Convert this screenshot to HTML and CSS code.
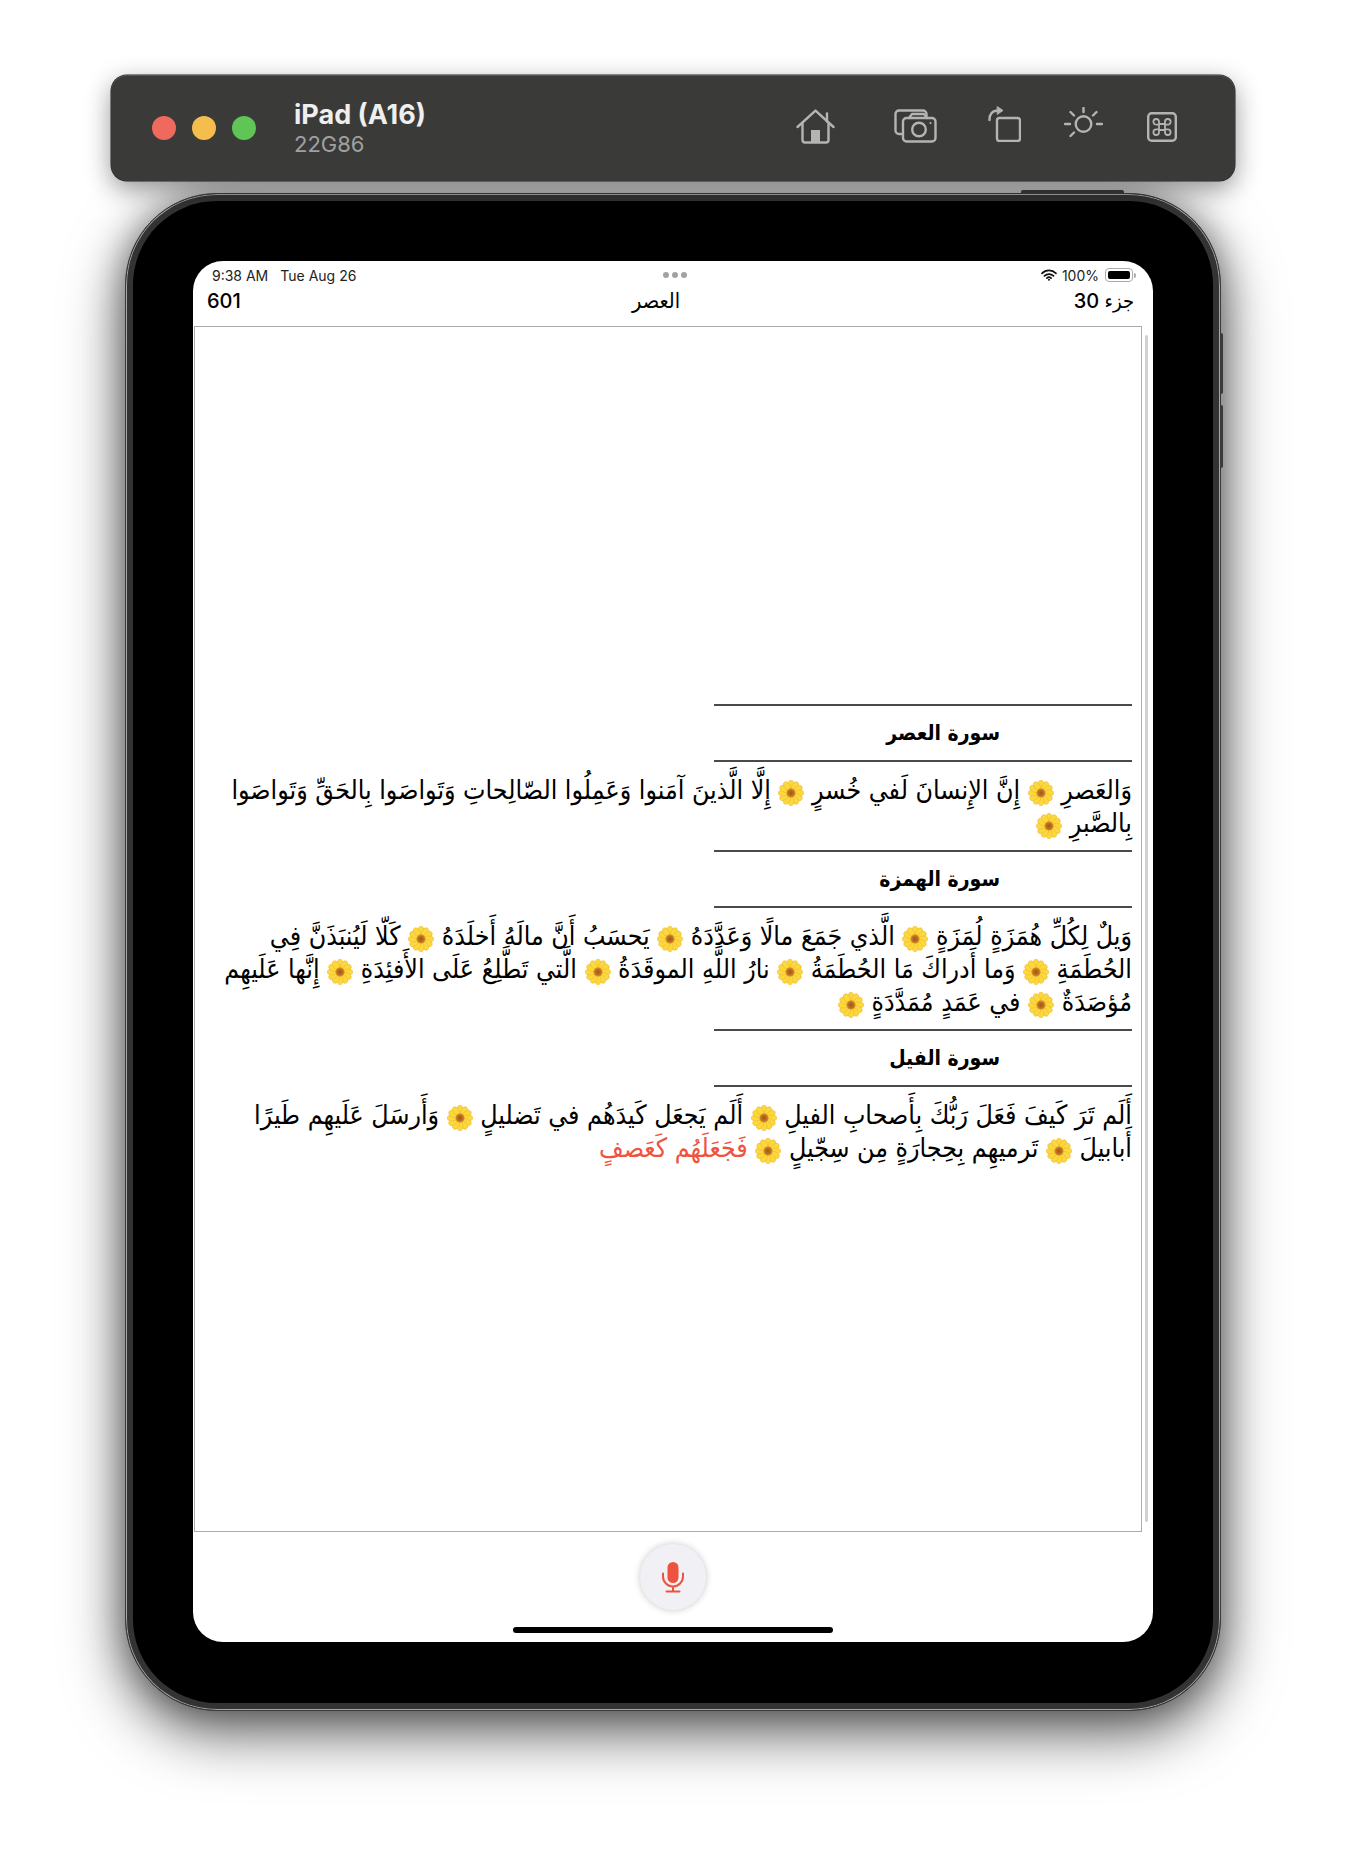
FILE: index.html
```html
<!DOCTYPE html>
<html lang="en">
<head>
<meta charset="utf-8">
<title>iPad (A16)</title>
<link rel="stylesheet" href="styles.css">
</head>
<body>
<svg class="defs" width="0" height="0" aria-hidden="true">
  <defs>
    <radialGradient id="core">
      <stop offset="0" stop-color="#a5531c"/>
      <stop offset="0.65" stop-color="#bd7320"/>
      <stop offset="1" stop-color="#e0a228"/>
    </radialGradient>
    <ellipse id="petal" cx="12" cy="4.600" rx="2.700" ry="4.300" fill="#fcd83f" stroke="#eeb526" stroke-width=".5"/>
    <symbol id="flower" viewBox="0 0 24 24">
      <use href="#petal"/>
      <use href="#petal" transform="rotate(30 12 12)"/>
      <use href="#petal" transform="rotate(60 12 12)"/>
      <use href="#petal" transform="rotate(90 12 12)"/>
      <use href="#petal" transform="rotate(120 12 12)"/>
      <use href="#petal" transform="rotate(150 12 12)"/>
      <use href="#petal" transform="rotate(180 12 12)"/>
      <use href="#petal" transform="rotate(210 12 12)"/>
      <use href="#petal" transform="rotate(240 12 12)"/>
      <use href="#petal" transform="rotate(270 12 12)"/>
      <use href="#petal" transform="rotate(300 12 12)"/>
      <use href="#petal" transform="rotate(330 12 12)"/>
      <circle cx="12" cy="12" r="4.300" fill="url(#core)"/>
    </symbol>
  </defs>
</svg>
<main class="stage">
  <header class="toolbar">
    <div class="lights">
      <span class="light red"></span>
      <span class="light yellow"></span>
      <span class="light green"></span>
    </div>
    <div class="device-name">
      <div class="name">iPad (A16)</div>
      <div class="build">22G86</div>
    </div>
    <div class="tools">
      <svg class="tool home" width="39" height="35" viewBox="0 0 39 35" fill="none" stroke="#b4b4b4" stroke-width="2.4" stroke-linecap="round" stroke-linejoin="round">
        <path d="M1.500 18 19.500 1.600 37.500 18"/>
        <path d="M6.500 15v16a2.500 2.500 0 0 0 2.500 2.500h21a2.500 2.500 0 0 0 2.500-2.500V15"/>
        <path d="M31 4.500v8"/>
        <path d="M15 33.500V21h9v12.500z" fill="#b4b4b4" stroke="none"/>
      </svg>
      <svg class="tool camera" width="43" height="34" viewBox="0 0 43 34" fill="none" stroke="#b4b4b4" stroke-width="2.4" stroke-linecap="round" stroke-linejoin="round">
        <path d="M7 25H5a3.500 3.500 0 0 1-3.500-3.500V5A3.500 3.500 0 0 1 5 1.500h24A3.500 3.500 0 0 1 32.500 5v2"/>
        <rect x="9" y="9" width="32.500" height="23.500" rx="3.500"/>
        <path d="M15 9l3-4h12l3 4"/>
        <circle cx="25" cy="20.500" r="6.800"/>
        <circle cx="36.500" cy="14" r="1.100" fill="#b4b4b4" stroke="none"/>
      </svg>
      <svg class="tool rotate" width="33" height="36" viewBox="0 0 33 36" fill="none" stroke="#b4b4b4" stroke-width="2.400" stroke-linecap="round" stroke-linejoin="round">
        <rect x="9" y="12" width="23" height="23" rx="2.500"/>
        <path d="M1.500 14C1.500 9 3.500 5 9 4.500"/>
        <path d="M9.500 .8 15 4.500 9.500 8.200z" fill="#b4b4b4" stroke-width="1"/>
      </svg>
      <svg class="tool sun" width="39" height="34" viewBox="0 0 39 34" fill="none" stroke="#b4b4b4" stroke-width="2.400" stroke-linecap="round">
        <circle cx="19.500" cy="17" r="7.800"/>
        <path d="M19.500 1v4M1 17h5M33 17h5M6.500 5l3.500 3.500M32.500 5 29 8.500M6.500 29l3.500-3.500"/>
      </svg>
      <svg class="tool cmd" width="30" height="30" viewBox="0 0 30 30" fill="none" stroke="#b4b4b4" stroke-width="2.400" stroke-linejoin="round">
        <rect x="1.200" y="1.200" width="27.600" height="27.600" rx="3.500"/>
        <path stroke-width="1.800" d="M12 12h6v6h-6zM12 12V9.800A2.800 2.800 0 1 0 9.200 12.600H12M18 12V9.800a2.800 2.800 0 1 1 2.800 2.800H18M12 18v2.200a2.800 2.800 0 1 1-2.800-2.800H12M18 18v2.200a2.800 2.800 0 1 0 2.800-2.800H18"/>
      </svg>
    </div>
  </header>

  <section class="device">
    <span class="hw hw-top"></span>
    <span class="hw hw-vol1"></span>
    <span class="hw hw-vol2"></span>
    <div class="screen">
      <div class="statusbar">
        <div class="status-left">
          <span>9:38 AM</span>
          <span>Tue Aug 26</span>
        </div>
        <div class="dots"><i></i><i></i><i></i></div>
        <div class="status-right">
          <svg width="16" height="12" viewBox="0 0 16 12" fill="none" stroke="#111" stroke-width="1.700" stroke-linecap="round">
            <path d="M1 4.300a10 10 0 0 1 14 0M3.500 6.900a6.500 6.500 0 0 1 9 0M5.900 9.200a3 3 0 0 1 4.200 0"/>
            <circle cx="8" cy="10.800" r="1" fill="#111" stroke="none"/>
          </svg>
          <span class="pct">100%</span>
          <span class="battery"><span class="battery-fill"></span></span>
          <span class="battery-nub"></span>
        </div>
      </div>
      <div class="pagebar">
        <span class="page-num">601</span>
        <span class="page-sura" dir="rtl">العصر</span>
        <span class="page-juz" dir="rtl">جزء 30</span>
      </div>
      <div class="reader">
        <article class="page" dir="rtl">
          <hr class="rule">
          <h2 class="sura">سورة العصر</h2>
          <hr class="rule">
          <p class="verses">وَالعَصرِ <svg class="fl"><use href="#flower"/></svg> إِنَّ الإِنسانَ لَفي خُسرٍ <svg class="fl"><use href="#flower"/></svg> إِلَّا الَّذينَ آمَنوا وَعَمِلُوا الصّالِحاتِ وَتَواصَوا بِالحَقِّ وَتَواصَوا<br>بِالصَّبرِ <svg class="fl"><use href="#flower"/></svg></p>
          <hr class="rule">
          <h2 class="sura">سورة الهمزة</h2>
          <hr class="rule">
          <p class="verses">وَيلٌ لِكُلِّ هُمَزَةٍ لُمَزَةٍ <svg class="fl"><use href="#flower"/></svg> الَّذي جَمَعَ مالًا وَعَدَّدَهُ <svg class="fl"><use href="#flower"/></svg> يَحسَبُ أَنَّ مالَهُ أَخلَدَهُ <svg class="fl"><use href="#flower"/></svg> كَلّا لَيُنبَذَنَّ فِي<br>الحُطَمَةِ <svg class="fl"><use href="#flower"/></svg> وَما أَدراكَ مَا الحُطَمَةُ <svg class="fl"><use href="#flower"/></svg> نارُ اللَّهِ الموقَدَةُ <svg class="fl"><use href="#flower"/></svg> الَّتي تَطَّلِعُ عَلَى الأَفئِدَةِ <svg class="fl"><use href="#flower"/></svg> إِنَّها عَلَيهِم<br>مُؤصَدَةٌ <svg class="fl"><use href="#flower"/></svg> في عَمَدٍ مُمَدَّدَةٍ <svg class="fl"><use href="#flower"/></svg></p>
          <hr class="rule">
          <h2 class="sura">سورة الفيل</h2>
          <hr class="rule">
          <p class="verses">أَلَم تَرَ كَيفَ فَعَلَ رَبُّكَ بِأَصحابِ الفيلِ <svg class="fl"><use href="#flower"/></svg> أَلَم يَجعَل كَيدَهُم في تَضليلٍ <svg class="fl"><use href="#flower"/></svg> وَأَرسَلَ عَلَيهِم طَيرًا<br>أَبابيلَ <svg class="fl"><use href="#flower"/></svg> تَرميهِم بِحِجارَةٍ مِن سِجّيلٍ <svg class="fl"><use href="#flower"/></svg> <span class="current">فَجَعَلَهُم كَعَصفٍ</span></p>
        </article>
        <span class="scrollbar"></span>
      </div>
      <footer class="controls">
        <button class="mic" type="button" aria-label="Microphone">
          <svg width="22" height="31" viewBox="0 0 22 31" fill="none" stroke="#ee5340" stroke-width="2" stroke-linecap="round">
            <rect x="5.500" y="0" width="11" height="21" rx="5.500" fill="#ee5340" stroke="none"/>
            <path d="M1 11.500v3a10 10 0 0 0 20 0v-3M11 24.500V29M4.500 29.500h13"/>
          </svg>
        </button>
        <span class="homebar"></span>
      </footer>
    </div>
  </section>
</main>
</body>
</html>
```

FILE: styles.css
```css
* { box-sizing: border-box; }

html, body {
  margin: 0;
  padding: 0;
  background: #fff;
}

.defs { display: block; height: 0; }

.stage {
  height: 1870px;
  padding: 75px 0 0 111px;
  overflow: hidden;
  font-family: Inter, "Liberation Sans", sans-serif;
}

/* simulator title bar */
.toolbar {
  position: relative;
  z-index: 2;
  display: flex;
  align-items: center;
  width: 1124px;
  height: 106px;
  padding: 0 58px 0 41px;
  background: #3a3a39;
  border-radius: 16px;
  box-shadow: inset 0 1px 0 #555, 0 0 0 .5px #222, 0 8px 26px rgba(0, 0, 0, .42);
}

.lights { display: flex; gap: 16px; }
.light { width: 24px; height: 24px; border-radius: 50%; }
.red { background: #f0695f; }
.yellow { background: #f5bd4e; }
.green { background: #5fc655; }

.device-name { margin-left: 38px; padding-top: 3px; }
.name {
  color: #efefef;
  font-size: 27px;
  font-weight: 700;
  line-height: 30px;
}
.build {
  color: #a0a0a0;
  font-size: 22px;
  line-height: 29px;
  font-weight: 400;
}

.tools { display: flex; align-items: center; margin: 0 0 4px auto; }
.tool { display: block; flex: none; }
.camera { margin-left: 59px; }
.rotate { margin-left: 51px; margin-top: -4px; }
.sun { margin-left: 43px; margin-top: -4px; }
.cmd { margin-left: 44px; margin-top: 2px; }

/* iPad body */
.device {
  position: relative;
  width: 1096px;
  height: 1518px;
  margin: 12px 0 0 14px;
  padding: 67px 67px 0 67px;
  background: #000;
  border: 1px solid #3b3b3b;
  border-radius: 92px;
  box-shadow:
    inset 0 0 0 1px #a5a5a5,
    inset 0 0 0 7px #333,
    0 22px 60px rgba(0, 0, 0, .62),
    0 0 34px rgba(0, 0, 0, .35);
}

.hw { position: absolute; background: #3a3a3a; }
.hw-top { top: -4px; left: 895px; width: 103px; height: 4px; border-radius: 2px 2px 0 0; }
.hw-vol1 { top: 139px; right: -3px; width: 3px; height: 61px; border-radius: 0 2px 2px 0; }
.hw-vol2 { top: 211px; right: -3px; width: 3px; height: 63px; border-radius: 0 2px 2px 0; }

.screen {
  display: flex;
  flex-direction: column;
  width: 960px;
  height: 1381px;
  background: #fff;
  border-radius: 30px;
  overflow: hidden;
  color: #000;
}

.statusbar {
  position: relative;
  display: flex;
  align-items: center;
  justify-content: space-between;
  flex: none;
  height: 28px;
  padding: 0 17px 0 19px;
  font-size: 14px;
  color: #222;
}
.status-left { display: flex; gap: 12px; }
.dots {
  position: absolute;
  left: 470px;
  top: 11px;
  display: flex;
  gap: 3px;
}
.dots i { width: 6px; height: 6px; border-radius: 50%; background: #a2a2a2; }
.status-right { display: flex; align-items: center; font-size: 14px; }
.pct { margin: 0 6px 0 5px; }
.battery {
  display: block;
  width: 28px;
  height: 14px;
  padding: 2px;
  border: 1px solid #aaa;
  border-radius: 4px;
}
.battery-fill { display: block; height: 100%; background: #000; border-radius: 2px; }
.battery-nub { width: 2px; height: 5px; margin-left: 1px; background: #aaa; border-radius: 0 2px 2px 0; }

.pagebar {
  position: relative;
  display: flex;
  align-items: center;
  justify-content: space-between;
  flex: none;
  height: 37px;
  padding: 0 19px 14px 14px;
  font-family: "DejaVu Sans", sans-serif;
}
.page-num { font-family: Inter, sans-serif; font-size: 20px; font-weight: 500; }
.page-sura { position: absolute; left: 439px; top: -1px; font-family: "DejaVu Sans Condensed", "DejaVu Sans", sans-serif; font-size: 21.500px; }
.page-juz { font-family: Inter, "DejaVu Sans Condensed", "DejaVu Sans", sans-serif; font-size: 20px; font-weight: 500; }

.reader {
  position: relative;
  flex: none;
  width: 948px;
  height: 1206px;
  margin-left: 1px;
  border: 1px solid #acacac;
  padding-top: 377px;
}
.scrollbar {
  position: absolute;
  top: 8px;
  right: -7px;
  width: 3px;
  height: 1187px;
  background: #d2d2d2;
  border-radius: 2px;
}

.page { padding: 0 9px 0 10px; }
.rule {
  width: 418px;
  height: 2px;
  margin: 0;
  border: 0;
  background: #4a4a4a;
}
.sura {
  display: flex;
  align-items: center;
  height: 54px;
  margin: 0;
  padding-right: 132px;
  font-family: "DejaVu Sans Condensed", "DejaVu Sans", sans-serif;
  font-size: 21px;
  font-weight: 700;
}
.verses {
  margin: 0;
  padding: 11px 0 11px;
  font-family: "DejaVu Sans Condensed", "DejaVu Sans", sans-serif;
  font-size: 26.500px;
  line-height: 33px;
}
.fl { width: 26px; height: 26px; margin: -8px 0; vertical-align: 1px; }
.current { color: #ef5340; }

.controls {
  position: relative;
  flex: 1;
  display: flex;
  justify-content: center;
  padding-top: 12px;
}
.mic {
  display: flex;
  align-items: center;
  justify-content: center;
  width: 66px;
  height: 66px;
  padding: 0;
  border: 0;
  border-radius: 50%;
  background: #f1f1f5;
  box-shadow: 0 0 7px rgba(0, 0, 0, .22);
}
.homebar {
  position: absolute;
  left: 320px;
  bottom: 9px;
  width: 320px;
  height: 6px;
  background: #000;
  border-radius: 3px;
}
```
